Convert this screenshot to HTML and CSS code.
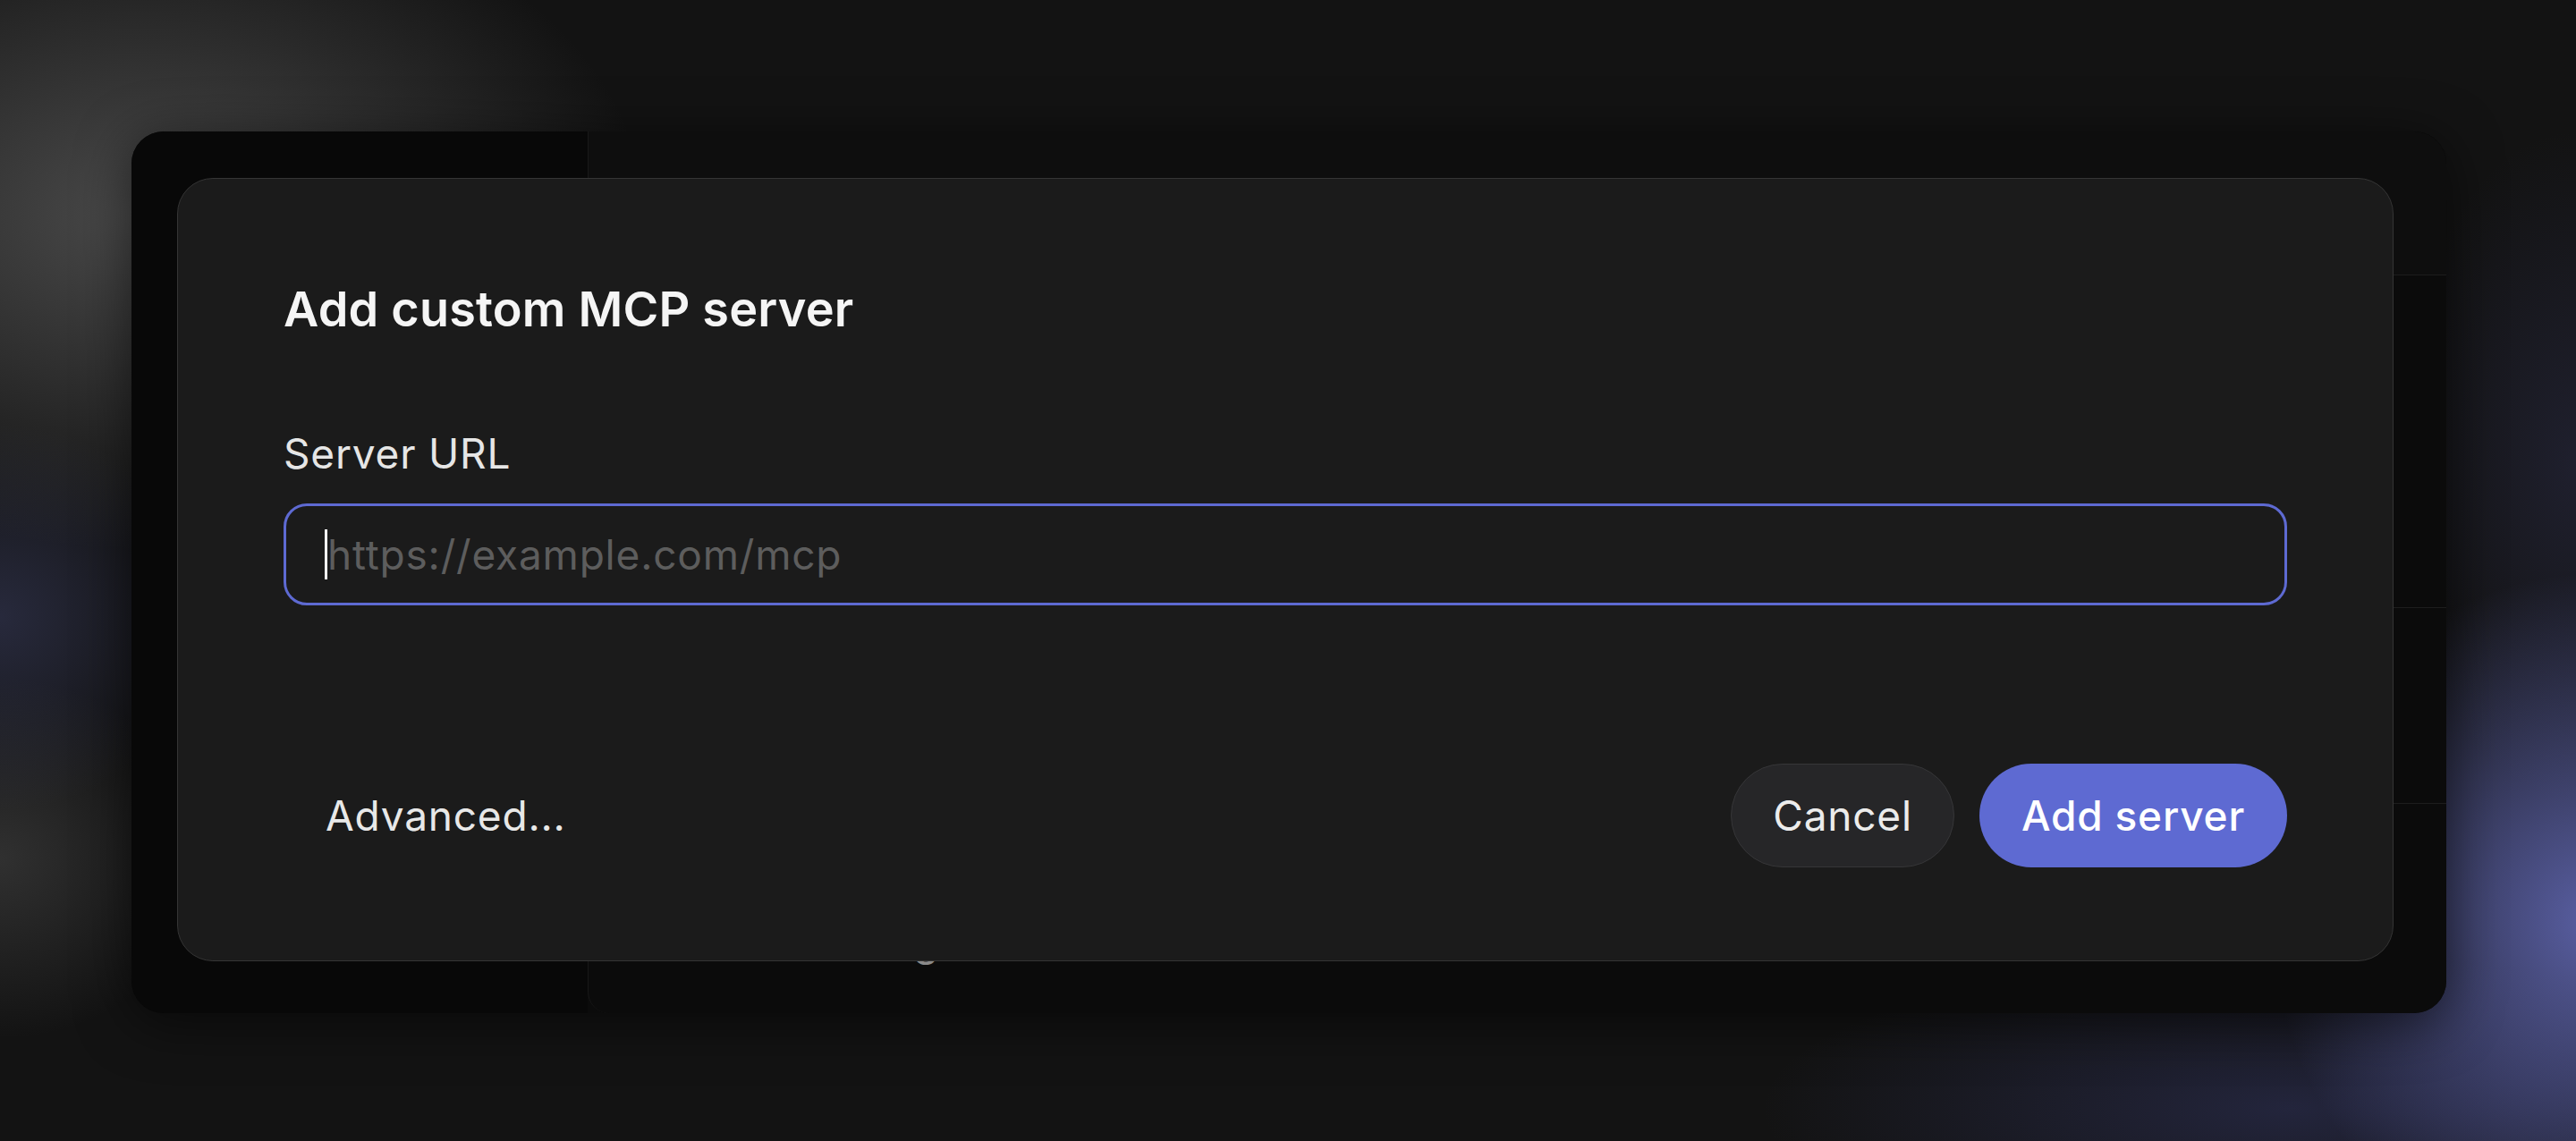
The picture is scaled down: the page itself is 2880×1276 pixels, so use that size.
FILE: index.html
```html
<!DOCTYPE html>
<html lang="en">

<head>
  <meta charset="UTF-8">
  <meta name="viewport" content="width=device-width, initial-scale=1.0">
  <title>Add custom MCP server</title>
  <link rel="stylesheet" href="styles.css">
</head>

<body>
  <div class="app-window">
    <aside class="sidebar"></aside>

    <main class="main-panel">
      <div class="panel-row row-header"></div>
      <div class="panel-row row-tall"></div>
      <div class="panel-row row-mid"></div>
      <div class="panel-row row-last">
        <span class="row-title">Server settings</span>
      </div>
    </main>

    <!-- modal over the settings window -->
    <div class="dialog">
      <h2 class="dialog-title">Add custom MCP server</h2>

      <label class="field-label" for="server-url">Server URL</label>
      <div class="url-field" id="server-url">
        <span class="caret"></span>
        <span class="placeholder">https://example.com/mcp</span>
      </div>

      <div class="dialog-footer">
        <button class="btn btn-ghost">Advanced...</button>
        <div class="footer-actions">
          <button class="btn btn-secondary">Cancel</button>
          <button class="btn btn-primary">Add server</button>
        </div>
      </div>
    </div>
  </div>
</body>

</html>
```

FILE: styles.css
```css
html,
body {
  margin: 0;
  height: 1276px;
  overflow: hidden;
}

body {
  box-sizing: border-box;
  padding: 147px 145px 143px 147px;
  font-family: Inter, "Noto Sans", "Liberation Sans", sans-serif;
  color: #ececec;
  background:
    radial-gradient(ellipse 500px 540px at 2900px 1030px, rgba(116, 124, 218, 0.72), rgba(116, 124, 218, 0) 72%),
    radial-gradient(ellipse 820px 240px at 2560px 1240px, rgba(72, 78, 155, 0.3), rgba(72, 78, 155, 0) 72%),
    radial-gradient(ellipse 280px 520px at 2880px 520px, rgba(62, 64, 115, 0.28), rgba(62, 64, 115, 0) 72%),
    radial-gradient(ellipse 780px 520px at 160px 240px, rgba(128, 128, 128, 0.5), rgba(128, 128, 128, 0) 72%),
    radial-gradient(ellipse 320px 300px at 0 690px, rgba(70, 75, 122, 0.4), rgba(70, 75, 122, 0) 72%),
    radial-gradient(ellipse 320px 280px at 0 960px, rgba(100, 100, 100, 0.36), rgba(100, 100, 100, 0) 72%),
    #131313;
}

/* window behind the modal */
.app-window {
  position: relative;
  height: 100%;
  display: flex;
  background-color: #0b0b0b;
  border-radius: 36px;
  box-shadow: 0 10px 60px rgba(0, 0, 0, 0.55);
  overflow: hidden;
}

.sidebar {
  width: 510px;
  flex-shrink: 0;
  background-color: #080808;
}

.main-panel {
  flex-grow: 1;
  display: flex;
  flex-direction: column;
  background-color: #0b0b0b;
  border-left: 1px solid #181818;
  border-bottom-left-radius: 24px;
}

.panel-row {
  border-bottom: 1px solid #1d1d1d;
}

.row-header {
  height: 160px;
  background-color: #0e0e0e;
}

.row-tall {
  height: 371px;
}

.row-mid {
  height: 218px;
}

.row-last {
  flex-grow: 1;
  border-bottom: none;
  padding: 127px 0 0 78px;
}

.row-title {
  font-size: 46px;
  line-height: 52px;
  letter-spacing: 0.8px;
  color: #8a8a8a;
}

/* dialog */
.dialog {
  position: absolute;
  top: 52px;
  left: 51px;
  right: 59px;
  bottom: 58px;
  box-sizing: border-box;
  padding: 114px 118px 0;
  display: flex;
  flex-direction: column;
  background-color: #1b1b1b;
  border: 1.5px solid #353535;
  border-radius: 40px;
}

.dialog-title {
  margin: 0;
  font-size: 54px;
  line-height: 64px;
  font-weight: 600;
  letter-spacing: 0.2px;
  color: #f5f5f5;
}

.field-label {
  display: block;
  margin-top: 103px;
  font-size: 46px;
  line-height: 52px;
  letter-spacing: 0.8px;
  color: #e6e6e6;
}

.url-field {
  margin-top: 30px;
  height: 114px;
  box-sizing: border-box;
  padding-left: 43px;
  display: flex;
  align-items: center;
  border: 3px solid #5e6ad2;
  border-radius: 26px;
}

.caret {
  width: 3px;
  height: 56px;
  background-color: #fff;
}

.placeholder {
  font-size: 46px;
  letter-spacing: 0.8px;
  color: #5d5d5d;
}

.dialog-footer {
  margin-top: 177px;
  display: flex;
  justify-content: space-between;
  align-items: center;
}

.footer-actions {
  display: flex;
  gap: 28px;
}

.btn {
  height: 116px;
  padding: 0 46px;
  border: 1.5px solid transparent;
  border-radius: 58px;
  font-family: inherit;
  font-size: 46px;
  letter-spacing: 0.8px;
  color: #ececec;
  background: none;
  cursor: pointer;
}

.btn-ghost {
  color: #e8e8e8;
}

.btn-secondary {
  background-color: #262628;
  border-color: #363638;
}

.btn-primary {
  background-color: #5e6ad2;
  color: #fff;
  font-weight: 500;
}
```
